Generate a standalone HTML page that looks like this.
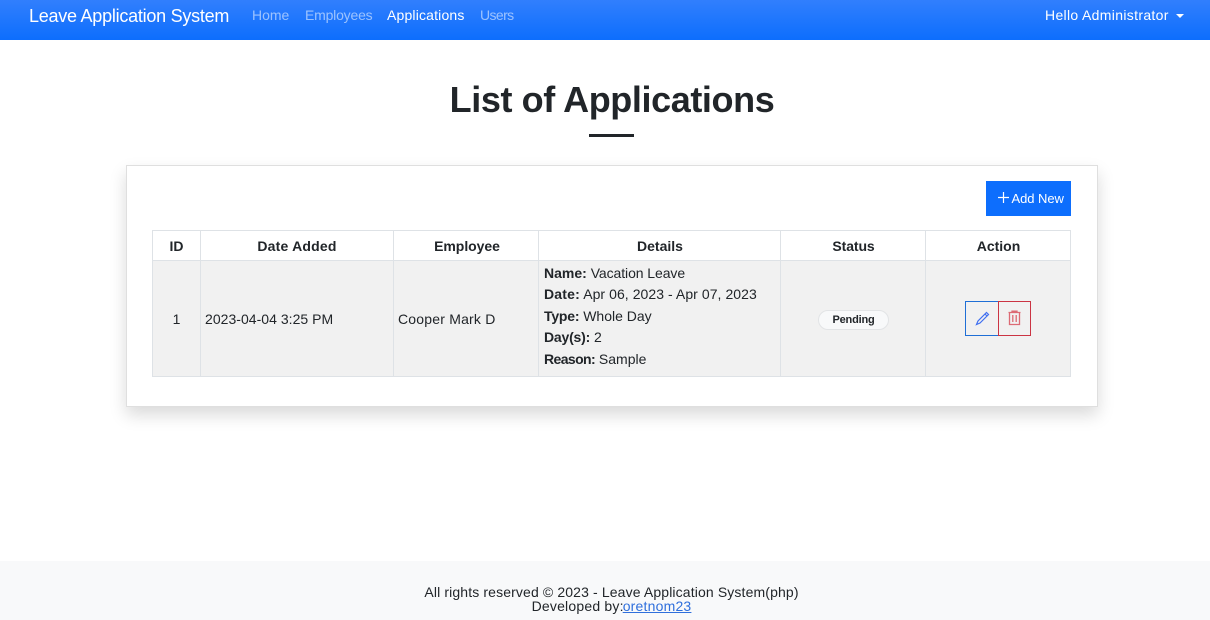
<!DOCTYPE html>
<html>
<head>
<meta charset="utf-8">
<style>
html,body{margin:0;padding:0;width:1210px;height:620px;overflow:hidden;background:#fff;}
body{position:relative;font-family:"Liberation Sans",sans-serif;color:#212529;font-size:14px;}
.t{position:absolute;white-space:nowrap;line-height:20px;}
.c{text-align:center;}
.b{position:absolute;box-sizing:border-box;}
b{font-weight:700;}
</style>
</head>
<body>
<div class="b" style="left:0;top:0;width:1210px;height:40px;background:linear-gradient(180deg,#317ffd,#0d6efd);"></div>
<div class="t" style="left:29px;top:6px;font-size:18px;color:#fff;letter-spacing:-.25px;">Leave Application System</div>
<div class="t" style="left:252px;top:5px;color:rgba(255,255,255,.55);">Home</div>
<div class="t" style="left:305px;top:5px;color:rgba(255,255,255,.55);letter-spacing:-.2px;">Employees</div>
<div class="t" style="left:387px;top:5px;color:#fff;letter-spacing:.17px;">Applications</div>
<div class="t" style="left:480px;top:5px;color:rgba(255,255,255,.55);letter-spacing:-.6px;">Users</div>
<div class="t" style="left:1045px;top:5px;color:#fff;letter-spacing:.33px;">Hello Administrator</div>
<div class="b" style="left:1176px;top:14px;width:0;height:0;border-left:4px solid transparent;border-right:4px solid transparent;border-top:4px solid #fff;"></div>

<div class="t c" style="left:0;width:1224px;top:76.5px;font-size:36px;line-height:46px;font-weight:700;letter-spacing:-.4px;">List of Applications</div>
<div class="b" style="left:589px;top:134px;width:45px;height:3px;background:#212529;"></div>

<div class="b" style="left:126px;top:165px;width:972px;height:242px;background:#fff;border:1px solid #dfdfdf;box-shadow:0 8px 16px rgba(0,0,0,.15);"></div>

<div class="b" style="left:986px;top:181px;width:85px;height:35px;background:#0d6efd;"></div>
<svg style="position:absolute;left:997px;top:191px;" width="13" height="13" viewBox="0 0 13 13"><path d="M6.5 1v11M1 6.5h11" stroke="#fff" stroke-width="1.2" fill="none"/></svg>
<div class="t" style="left:1011.5px;top:189px;font-size:13px;color:#fff;letter-spacing:-.05px;">Add New</div>

<div class="b" style="left:152px;top:230px;width:919px;height:147px;border:1px solid #dee2e6;"></div>
<div class="b" style="left:153px;top:261px;width:917px;height:115px;background:#f1f1f1;"></div>
<div class="b" style="left:153px;top:260px;width:917px;height:1px;background:#dee2e6;"></div>
<div class="b" style="left:200px;top:231px;width:1px;height:145px;background:#dee2e6;"></div>
<div class="b" style="left:393px;top:231px;width:1px;height:145px;background:#dee2e6;"></div>
<div class="b" style="left:538px;top:231px;width:1px;height:145px;background:#dee2e6;"></div>
<div class="b" style="left:780px;top:231px;width:1px;height:145px;background:#dee2e6;"></div>
<div class="b" style="left:925px;top:231px;width:1px;height:145px;background:#dee2e6;"></div>

<div class="t c" style="left:153px;width:47px;top:236px;font-weight:700;">ID</div>
<div class="t c" style="left:201px;width:192px;top:236px;font-weight:700;letter-spacing:.2px;">Date Added</div>
<div class="t c" style="left:394px;width:146px;top:236px;font-weight:700;letter-spacing:-.05px;">Employee</div>
<div class="t c" style="left:539px;width:242px;top:236px;font-weight:700;">Details</div>
<div class="t c" style="left:781px;width:145px;top:236px;font-weight:700;letter-spacing:-.1px;">Status</div>
<div class="t c" style="left:926px;width:145px;top:236px;font-weight:700;">Action</div>

<div class="t c" style="left:153px;width:47px;top:309px;">1</div>
<div class="t" style="left:205px;top:309px;letter-spacing:.03px;">2023-04-04 3:25 PM</div>
<div class="t" style="left:398px;top:309px;letter-spacing:.2px;">Cooper Mark D</div>

<div class="t" style="left:544px;top:263px;"><b>Name:</b> <span style="letter-spacing:-.08px;">Vacation Leave</span></div>
<div class="t" style="left:544px;top:284px;letter-spacing:.06px;"><b style="letter-spacing:.2px;">Date:</b> Apr 06, 2023 - Apr 07, 2023</div>
<div class="t" style="left:544px;top:306px;"><b style="letter-spacing:-.2px;">Type:</b> Whole Day</div>
<div class="t" style="left:544px;top:327px;"><b style="letter-spacing:-.2px;">Day(s):</b> 2</div>
<div class="t" style="left:544px;top:349px;"><b style="letter-spacing:-.6px;">Reason:</b> Sample</div>

<div class="b" style="left:818px;top:310px;width:71px;height:20px;background:#f8f9fa;border:1px solid #e2e4e6;border-radius:10px;"></div>
<div class="t c" style="left:818px;width:71px;top:310px;font-size:11px;font-weight:700;letter-spacing:-.2px;">Pending</div>

<div class="b" style="left:965px;top:301px;width:34px;height:35px;border:1px solid #1f6fd6;"></div>
<div class="b" style="left:998px;top:301px;width:33px;height:35px;border:1px solid #cb3443;"></div>
<svg style="position:absolute;left:975px;top:311px;" width="15" height="15" viewBox="0 0 15 15"><path d="M11.5 1.5l2 2L5 12l-3.5 1.5L3 10zM10 3l2 2" stroke="#3f6ff0" stroke-width="1.2" fill="none"/></svg>
<svg style="position:absolute;left:1007px;top:310px;" width="15" height="16" viewBox="0 0 15 16"><path d="M1.5 2.5h12M5 2.5V1.2h5v1.3M2.5 2.5v12h10v-12M5.8 5v7M9.2 5v7" stroke="#dc6a74" stroke-width="1.3" fill="none"/></svg>

<div class="b" style="left:0;top:561px;width:1210px;height:59px;background:#f8f9fa;"></div>
<div class="t c" style="left:0;width:1223px;top:585px;line-height:14px;letter-spacing:.13px;">All rights reserved © 2023 - Leave Application System(php)</div>
<div class="t c" style="left:0;width:1223px;top:599px;line-height:14px;letter-spacing:.2px;">Developed by:<span style="color:#2f6fdc;text-decoration:underline;margin-left:-1px;">oretnom23</span></div>
</body>
</html>
